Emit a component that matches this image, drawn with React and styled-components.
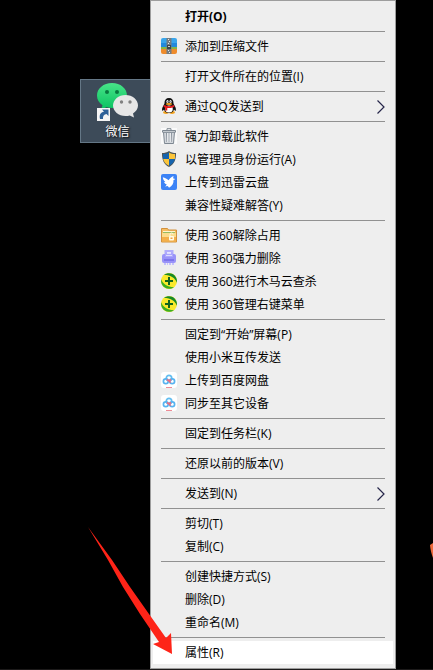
import React from 'react'
import styled, { createGlobalStyle } from 'styled-components'

const GlobalStyle = createGlobalStyle`
  * { box-sizing: border-box; }

  body {
    margin: 0;
    background: #000;
    font-family: 'Open Sans', 'Noto Sans CJK SC', sans-serif;
    font-size: 12px;
    overflow: hidden;
  }
`

const ZipIcon = () => (
  <Icon viewBox="0 0 16 16">
    <path d="M2 0h12a2 2 0 0 1 2 2v8H0V2a2 2 0 0 1 2-2z" fill="#3aa6ec" />
    <path d="M0 5h16v5H0z" fill="#2389dc" />
    <path d="M0 9h16v3H0z" fill="#86b548" />
    <path d="M0 11h16v3a2 2 0 0 1-2 2H2a2 2 0 0 1-2-2z" fill="#ee8b2c" />
    <path d="M5.500 0h5v16h-5z" fill="#737c82" />
    <path d="M7 1h1v1H7zM8 3h1v1H8zM7 5h1v1H7zM7 12h1v1H7zM8 14h1v1H8z" fill="#e6e6e6" />
    <path d="M6 7h4v4H6z" fill="#3d4448" />
    <path d="M7 8h2v1H7z" fill="#c9cdd0" />
  </Icon>
)

const QQIcon = () => (
  <Icon viewBox="0 0 16 16">
    <ellipse cx="5" cy="14.5" rx="3" ry="1.4" fill="#f3a21b" />
    <ellipse cx="11" cy="14.5" rx="3" ry="1.4" fill="#f3a21b" />
    <path d="M8 0c3 0 4.600 2 4.500 5 0 1 .5 1.500 1 2.500 1 1.700 1.800 3.500 1.300 5-.3.800-1.300-.2-1.800-1C12.500 14 10.500 15 8 15s-4.500-1-5-3.500c-.5.8-1.500 1.800-1.800 1-.5-1.500.3-3.300 1.300-5 .5-1 1-1.500 1-2.500C3.400 2 5 0 8 0z" fill="#111" />
    <ellipse cx="8" cy="11" rx="3.800" ry="3.600" fill="#fff" />
    <path d="M3 7c3 1.500 7 1.500 10 0l.4 1.800c-1.600.9-3.400 1.300-5.400 1.300l-1.700-.1v2.400H4.200V9.600c-.8-.2-1.300-.5-1.700-.8z" fill="#e5191c" />
    <ellipse cx="6.500" cy="3.500" rx="1.100" ry="1.600" fill="#fff" />
    <ellipse cx="9.500" cy="3.500" rx="1.100" ry="1.600" fill="#fff" />
    <circle cx="6.900" cy="3.700" r=".5" />
    <circle cx="9.200" cy="3.700" r=".5" />
    <ellipse cx="8" cy="6" rx="3.200" ry="1" fill="#f6a51c" />
  </Icon>
)

const TrashIcon = () => (
  <Icon viewBox="0 0 16 16">
    <path d="M0 0h16v16H0z" fill="#fafafa" />
    <path d="M2.500 4h11l-1 11.500h-9z" fill="#d3d7dc" stroke="#7d8791" />
    <path d="M5.500 5l.4 9M8 5v9M10.500 5l-.4 9" stroke="#8b949e" fill="none" />
    <path d="M6.800 5v9M9.200 5v9" stroke="#f3f5f7" fill="none" />
    <path d="M1.500 2.500h13v1.700h-13z" fill="#e3e6ea" stroke="#7d8791" />
    <path d="M6 2V.7h4V2" stroke="#7d8791" fill="none" />
  </Icon>
)

const ShieldIcon = () => (
  <Icon viewBox="0 0 16 16">
    <path d="M8 0c2 1.500 4.300 2 7 2 .2 7-2 11.500-7 14C3 13.500.8 9 1 2c2.700 0 5-.5 7-2z" fill="#4c5559" />
    <path d="M8 1.400V8H2.100C1.900 6.500 1.900 4.800 2 3c2.300-.1 4.300-.6 6-1.600z" fill="#1664ae" />
    <path d="M8 1.400C9.700 2.400 11.700 2.900 14 3c.1 1.800.1 3.500-.1 5H8z" fill="#fbc53b" />
    <path d="M2.100 8H8v6.800C4.800 13.200 2.800 11 2.100 8z" fill="#fbc53b" />
    <path d="M13.900 8H8v6.800c3.200-1.600 5.200-3.800 5.900-6.800z" fill="#1664ae" />
  </Icon>
)

const XunleiIcon = () => (
  <Icon viewBox="0 0 16 16">
    <rect width="16" height="16" rx="2" fill="#3c83f6" />
    <path d="M1.800 3.300c2.200.8 4.200 1.700 5.700 2.900C8.700 4.400 10.500 2.900 12.600 2c-.4 1-.5 1.800-.4 2.600.8-.2 1.500 0 2 .6l-1.700.8c.2 3.500-1.200 5.800-4.500 7.800-.3-.8-.9-1.400-1.500-1.700l-2.400.5c.8-.7 1.300-1.400 1.600-2.300-1.400-.5-2.300-1.300-2.600-2.400l1.200.1C3 6.900 2 5.300 1.800 3.300z" fill="#fff" />
  </Icon>
)

const FolderIcon = () => (
  <Icon viewBox="0 0 16 16">
    <path d="M.5 1.500h6l1 1.500h8v12H.5z" fill="#f6bd62" stroke="#d2913d" />
    <path d="M2 4h12v1H2z" fill="#fff5cf" />
    <path d="M2 5h12v1H2z" fill="#97ba62" />
    <path d="M1 6h14v4H1z" fill="#fbdc8c" />
    <path d="M1 10h14v4.500H1z" fill="#f4b04b" />
    <rect x="8" y="9" width="5" height="4.500" rx="1" fill="#fffbe8" />
    <path d="M9 9V7.500a1.500 1.500 0 0 1 3 0" stroke="#fffbe8" fill="none" />
    <path d="M9.500 10.500h2V12h-2z" fill="#eda046" />
  </Icon>
)

const ShredderIcon = () => (
  <Icon viewBox="0 0 16 16">
    <path d="M3.500 0h9v6h-9z" fill="#b0acfb" />
    <path d="M6 2h4v1H6zM6 4h4v1H6z" fill="#e5e3ff" />
    <rect x="1" y="4" width="14" height="9" rx="2" fill="#9993f8" />
    <path d="M4 3h8v4H4z" fill="#aaa5fd" />
    <path d="M6 3h4v1H6zM5 5h6v1H5z" fill="#dcdaff" />
    <path d="M3 9h10v2H3z" fill="#7c74ec" />
    <path d="M3 13h2v2H3zM6 13h1v2H6zM8 13h2v2H8zM11 13h2v2h-2z" fill="#c3c0fc" />
  </Icon>
)

const SafeIcon = () => (
  <Icon viewBox="0 0 16 16">
    <circle cx="8" cy="8" r="8" fill="#f9e92b" />
    <path d="M3 1.800C7-1 13 0 15.200 4.700c.7 1.600 1 3.500.6 5C14.500 5.500 10 2 3 1.800z" fill="#178a27" />
    <path d="M13 14.200C9 17 3 16 .8 11.300c-.7-1.600-1-3.500-.6-5C1.500 10.500 6 14 13 14.200z" fill="#3cae22" />
    <path d="M7 4h2v3h3v2H9v3H7V9H4V7h3z" fill="#12651c" />
  </Icon>
)

const BaiduIcon = () => (
  <Icon viewBox="0 0 16 16">
    <rect width="16" height="16" rx="3" fill="#fff" />
    <g fill="none" strokeWidth="1.700">
      <circle cx="8" cy="6" r="2.700" stroke="#62bdf0" />
      <circle cx="4.800" cy="9.300" r="2.400" stroke="#58b4f0" />
      <circle cx="11.200" cy="9.300" r="2.400" stroke="#58b4f0" />
      <path d="M6 7.500L8 9l2-1.500M8 9l1.700 1.700" stroke="#ec6d80" />
    </g>
    <path d="M5 15.500h6" stroke="#ee8c96" />
  </Icon>
)

const WechatIcon = () => (
  <WechatSvg viewBox="0 0 42 38">
    <defs>
      <linearGradient id="wechat-green" x1="0" y1="0" x2="0" y2="1">
        <stop offset="0" stopColor="#48e488" />
        <stop offset="1" stopColor="#08c160" />
      </linearGradient>
    </defs>
    <path d="M15 0C6.500 0 0 5.500 0 12.500c0 4 2 7.500 5.500 9.800L4 27l5.500-3c1.700.6 3.500 1 5.500 1 8.500 0 15-5.500 15-12.500S23.500 0 15 0z" fill="url(#wechat-green)" />
    <circle cx="10" cy="9" r="2" fill="#087a40" />
    <circle cx="20" cy="9" r="2" fill="#087a40" />
    <path d="M28.500 12C21.500 12 16 16.700 16 22.500S21.500 33 28.500 33c1.500 0 3-.2 4.200-.6L37 34.500l-1-4c3-2 5-4.800 5-8C41 16.700 35.500 12 28.500 12z" fill="#e6e6e6" />
    <circle cx="24.500" cy="19" r="1.700" fill="#808080" />
    <circle cx="33" cy="19" r="1.700" fill="#808080" />
    <path d="M0 25h13v13H0z" fill="#f4f4f4" />
    <path d="M3 36c-1-4 .5-7 4-7.300L5 26.500h6.500V33l-2-2C7 31.200 5.700 33 6 36z" fill="#2d6098" />
  </WechatSvg>
)

const groups = [
  [{ label: '打开(O)', bold: true }],
  [{ label: '添加到压缩文件', icon: ZipIcon }],
  [{ label: '打开文件所在的位置(I)' }],
  [{ label: '通过QQ发送到', icon: QQIcon, submenu: true }],
  [
    { label: '强力卸载此软件', icon: TrashIcon },
    { label: '以管理员身份运行(A)', icon: ShieldIcon },
    { label: '上传到迅雷云盘', icon: XunleiIcon },
    { label: '兼容性疑难解答(Y)' },
  ],
  [
    { label: '使用 360解除占用', icon: FolderIcon },
    { label: '使用 360强力删除', icon: ShredderIcon },
    { label: '使用 360进行木马云查杀', icon: SafeIcon },
    { label: '使用 360管理右键菜单', icon: SafeIcon },
  ],
  [
    { label: '固定到“开始”屏幕(P)' },
    { label: '使用小米互传发送' },
    { label: '上传到百度网盘', icon: BaiduIcon },
    { label: '同步至其它设备', icon: BaiduIcon },
  ],
  [{ label: '固定到任务栏(K)' }],
  [{ label: '还原以前的版本(V)' }],
  [{ label: '发送到(N)', submenu: true }],
  [{ label: '剪切(T)' }, { label: '复制(C)' }],
  [{ label: '创建快捷方式(S)' }, { label: '删除(D)' }, { label: '重命名(M)' }],
  [{ label: '属性(R)', active: true }],
]

const Item = ({ label, icon: ItemIcon, bold, submenu, active }) => (
  <MenuItem type="button" role="menuitem" $bold={bold} $active={active}>
    <IconSlot>{ItemIcon && <ItemIcon />}</IconSlot>
    <Label>{label}</Label>
    {submenu && (
      <Chevron viewBox="0 0 8 14">
        <path d="M.5 .5L7 7 .5 13.500" fill="none" stroke="#26264a" strokeWidth="1.200" />
      </Chevron>
    )}
  </MenuItem>
)

export default function App() {
  return (
    <Desktop>
      <GlobalStyle />
      <Shortcut type="button">
        <WechatIcon />
        <ShortcutName>微信</ShortcutName>
      </Shortcut>
      <Menu role="menu">
        {groups.map((items, index) => (
          <Group key={index} role="group">
            {items.map(item => <Item key={item.label} {...item} />)}
          </Group>
        ))}
      </Menu>
      <Pointer viewBox="0 0 86 130">
        <path d="M0 0L24 33 42 60 61 87 78 111 83 106 84 127 65 117 71 115 52 87 35 60 20 33z" fill="#fe2418" />
      </Pointer>
      <Mark viewBox="0 0 3 15">
        <path d="M0 2L3 0V15C1.500 11 .5 7 0 2z" fill="#ee6a3c" />
      </Mark>
    </Desktop>
  )
}

const Desktop = styled.main`
  position: relative;
  display: grid;
  grid-template-columns: 150px 246px 1fr;
  align-items: start;
  min-height: 100vh;
  border-bottom: 1px solid #1c1a1a;
  background: #000;
`

const Shortcut = styled.button`
  display: flex;
  flex-direction: column;
  align-items: center;
  gap: 2px;
  margin: 79px 0 0 80px;
  padding: 3px 0 0 4px;
  height: 64px;
  border: 1px solid #647786;
  border-right: 0;
  background: #3d4b59;
  color: #fff;
  font: inherit;
`

const WechatSvg = styled.svg`
  width: 42px;
  height: 38px;
  flex: none;
`

const ShortcutName = styled.span`
  line-height: 18px;
  text-shadow: 1px 1px 2px #000;
`

const Menu = styled.div`
  padding: 4px 2px;
  border: 1px solid #9d9d9d;
  background: #eee;
`

const Group = styled.div`
  & + &::before {
    content: '';
    display: block;
    height: 1px;
    margin: 3px 8px;
    background: #919191;
  }
`

const MenuItem = styled.button`
  display: flex;
  align-items: center;
  gap: 8px;
  width: 100%;
  height: 23px;
  padding: 0 8px;
  border: 0;
  background: ${props => props.$active ? '#fff' : 'transparent'};
  color: #000;
  font: inherit;
  font-weight: ${props => props.$bold ? 700 : 400};
  text-align: left;
`

const IconSlot = styled.span`
  display: flex;
  flex: none;
  width: 16px;
  height: 17px;
`

const Icon = styled.svg`
  width: 16px;
  height: 16px;
`

const Label = styled.span`
  flex: 1;
  line-height: 18px;
  white-space: nowrap;
`

const Chevron = styled.svg`
  width: 8px;
  height: 14px;
`

const Pointer = styled.svg`
  position: absolute;
  top: 527px;
  left: 88px;
  width: 86px;
  height: 130px;
  pointer-events: none;
`

const Mark = styled.svg`
  position: absolute;
  top: 543px;
  right: 0;
  width: 3px;
  height: 15px;
`
